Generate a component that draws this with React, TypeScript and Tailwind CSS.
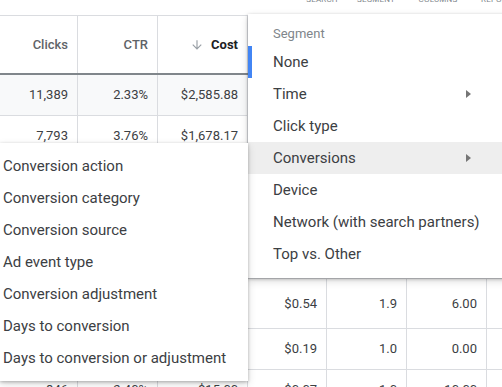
import React from "react";

const widths = ["w-[80px]", "w-[80px]", "w-[90px]", "w-[79px]", "w-[80px]", "w-[80px]", "w-[80px]"];

type Row = { cells: string[]; h: string; bg?: string };

const rows: Row[] = [
  { cells: ["11,389", "2.33%", "$2,585.88", "$0.23", "2.0", "22.00", "4.1"], h: "h-[41px]", bg: "bg-[#f8f9fa]" },
  { cells: ["7,793", "3.76%", "$1,678.17", "$0.22", "1.7", "12.00", "3.3"], h: "h-[41px]" },
  { cells: ["2,410", "1.92%", "$912.40", "$0.38", "1.5", "8.00", "2.9"], h: "h-[41px]" },
  { cells: ["1,802", "2.07%", "$640.11", "$0.36", "1.4", "5.00", "2.2"], h: "h-[41px]" },
  { cells: ["1,120", "1.55%", "$420.76", "$0.38", "1.6", "3.00", "1.8"], h: "h-[40px]" },
  { cells: ["640", "2.12%", "$345.60", "$0.54", "1.9", "6.00", "1.2"], h: "h-[50px]" },
  { cells: ["512", "1.88%", "$97.28", "$0.19", "1.0", "0.00", "1.0"], h: "h-[41px]" },
  { cells: ["846", "2.40%", "$15.00", "$0.07", "1.0", "10.00", "1.1"], h: "h-[41px]" },
];

const mainItems = [
  { label: "None", selected: true },
  { label: "Time", arrow: true },
  { label: "Click type" },
  { label: "Conversions", arrow: true, active: true },
  { label: "Device" },
  { label: "Network (with search partners)" },
  { label: "Top vs. Other" },
];

const subItems = [
  "Conversion action",
  "Conversion category",
  "Conversion source",
  "Ad event type",
  "Conversion adjustment",
  "Days to conversion",
  "Days to conversion or adjustment",
];

function ArrowDown() {
  return (
    <svg width="14" height="14" viewBox="0 0 24 24" className="shrink-0">
      <path d="M20 12l-1.41-1.41L13 16.17V4h-2v12.17l-5.58-5.59L4 12l8 8 8-8z" fill="#9aa0a6" />
    </svg>
  );
}

export default function App() {
  return (
    <div className="relative w-[502px] h-[387px] overflow-hidden bg-white [font-family:Roboto,'Liberation_Sans',sans-serif]">
      {/* toolbar labels */}
      <div className="h-[15px] flex items-start overflow-hidden">
        <div className="flex text-[8px] leading-[8px] text-[#80868b] tracking-[0.2px] mt-[-4px] ml-[292px]">
          <div className="w-[60px] text-center">SEARCH</div>
          <div className="w-[48px] text-center">SEGMENT</div>
          <div className="w-[76px] text-center">COLUMNS</div>
          <div className="pl-[5px] whitespace-nowrap">REPORTS</div>
        </div>
      </div>

      {/* table */}
      <div className="ml-[-2px] border-t border-[#dadce0] w-[600px]">
        <div className="flex h-[59px] border-b-2 border-[#80868b]">
          <div className={`${widths[0]} border-r border-[#dadce0] flex items-center justify-end pr-[9px] text-[13px] font-medium text-[#5f6368]`}>Clicks</div>
          <div className={`${widths[1]} border-r border-[#dadce0] flex items-center justify-end pr-[9px] text-[13px] font-medium text-[#5f6368]`}>CTR</div>
          <div className={`${widths[2]} border-r border-[#dadce0] flex items-center justify-end gap-[7px] pr-[9px] text-[13px] font-bold text-[#202124]`}>
            <ArrowDown />
            <span>Cost</span>
          </div>
          <div className={`${widths[3]} border-r border-[#dadce0] flex items-center justify-end pr-[9px] text-[13px] font-medium text-[#5f6368]`}>Avg. CPC</div>
          <div className={`${widths[4]} border-r border-[#dadce0] flex items-center justify-end pr-[9px] text-[13px] font-medium text-[#5f6368]`}>Avg. pos.</div>
          <div className={`${widths[5]} border-r border-[#dadce0] flex items-center justify-end pr-[9px] text-[13px] font-medium text-[#5f6368]`}>Conv.</div>
          <div className={`${widths[6]} border-r border-[#dadce0] flex items-center justify-end pr-[9px] text-[13px] font-medium text-[#5f6368]`}>Conv. rate</div>
        </div>
        {rows.map((r, i) => (
          <div key={i} className={`flex ${r.h} border-b border-[#dadce0] ${r.bg ?? ""}`}>
            {r.cells.map((c, j) => (
              <div
                key={j}
                className={`${widths[j]} border-r border-[#dadce0] flex items-center justify-end pr-[9px] text-[13px] text-[#3c4043]`}
              >
                {c}
              </div>
            ))}
          </div>
        ))}
      </div>

      {/* main segment menu */}
      <div className="absolute left-[248px] top-[14px] w-[280px] bg-white pb-[8px] shadow-[0_1px_3px_rgba(0,0,0,0.25),0_3px_8px_rgba(0,0,0,0.15)] z-10">
        <div className="h-[32px] pl-[25px] pt-[12px] text-[13px] leading-[16px] text-[#80868b]">Segment</div>
        {mainItems.map((it) => (
          <div
            key={it.label}
            className={`relative h-[32px] flex items-center pl-[25px] text-[15px] text-[#3c4043] whitespace-nowrap ${it.active ? "bg-[#eeeeee]" : ""}`}
          >
            {it.selected && <div className="absolute left-0 top-0 bottom-0 w-[4px] bg-[#4285f4]" />}
            {it.label}
            {it.arrow && (
              <div className="absolute left-[218px] top-[12px] w-0 h-0 border-y-[4px] border-y-transparent border-l-[5px] border-l-[#757575]" />
            )}
          </div>
        ))}
      </div>

      {/* conversions submenu */}
      <div className="absolute left-0 top-[143px] w-[248px] bg-white py-[7px] shadow-[0_1px_3px_rgba(0,0,0,0.25),0_3px_8px_rgba(0,0,0,0.15)] z-20">
        {subItems.map((s) => (
          <div key={s} className="h-[32px] flex items-center pl-[3px] text-[15px] text-[#3c4043] whitespace-nowrap">
            {s}
          </div>
        ))}
      </div>
    </div>
  );
}
